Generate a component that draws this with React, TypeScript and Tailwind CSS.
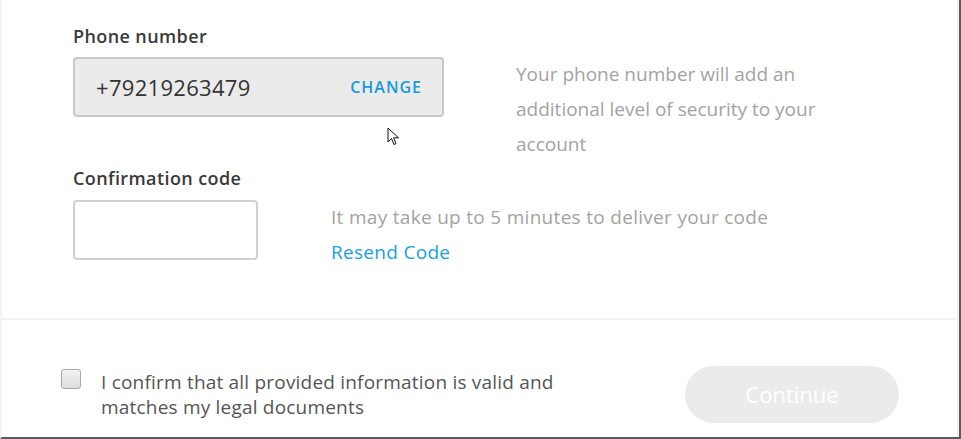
export default function App() {
  return (
    <div
      className="relative w-[961px] h-[439px] bg-white flex flex-col border-l-2 border-l-[#f3f3f3] border-r-2 border-r-[#5c5c5c] border-b-2 border-b-[#5c5c5c] overflow-hidden"
      style={{ fontFamily: '"Open Sans", "Liberation Sans", sans-serif' }}
    >
      {/* Top: phone + code */}
      <div className="h-[318px] pl-[71px] pt-[24px] border-r-2 border-r-[#f0f0f0]">
        <div className="flex items-start h-[93px]">
          <div className="w-[371px] shrink-0">
            <div className="h-[24px] text-[18px] leading-[24px] font-semibold tracking-[0.4px] text-[#3a3a3a]">Phone number</div>
            <div className="mt-[9px] h-[60px] flex items-center justify-between rounded-[4px] border-2 border-[#c9c9c9] bg-[#ebebeb] pl-[21px] pr-[20px]">
              <span className="text-[22px] text-[#333] tracking-[0.3px]">+79219263479</span>
              <span className="text-[16px] font-semibold text-[#1a9ad7] tracking-[1px]">CHANGE</span>
            </div>
          </div>
          <p className="ml-[72px] mt-[33px] w-[340px] text-[19px] leading-[35px] text-[#a3a3a3]">
            Your phone number will add an additional level of security to your account
          </p>
        </div>

        <div className="flex items-start mt-[49px]">
          <div className="w-[185px] shrink-0">
            <div className="h-[24px] text-[18px] leading-[24px] font-semibold tracking-[0.4px] text-[#3a3a3a]">Confirmation code</div>
            <input
              type="text"
              className="mt-[10px] block w-[185px] h-[60px] rounded-[4px] border-2 border-[#d0d0d0] bg-white outline-none"
            />
          </div>
          <div className="ml-[73px] mt-[34px] text-[19px] leading-[35px] tracking-[0.3px]">
            <p className="text-[#a3a3a3]">It may take up to 5 minutes to deliver your code</p>
            <p className="text-[#1a9fe0]">Resend Code</p>
          </div>
        </div>
      </div>

      {/* Bottom: confirm + continue */}
      <div className="flex-1 border-t-2 border-t-[#f2f2f2] border-r-2 border-r-[#f0f0f0] flex items-start pl-[59px] pt-[49px]">
        <div className="flex items-start">
          <div className="w-[20px] h-[20px] rounded-[3px] border border-[#a8a8a8] bg-gradient-to-b from-[#f2f2f2] to-[#dedede] shrink-0" />
          <p className="ml-[20px] mt-[1px] w-[500px] text-[19px] leading-[25px] tracking-[0.2px] text-[#555]">
            I confirm that all provided information is valid and matches my legal documents
          </p>
        </div>
        <button className="ml-[84px] -mt-[3px] w-[214px] h-[57px] rounded-full bg-[#ebebeb] text-white text-[22px]">
          Continue
        </button>
      </div>

      {/* mouse pointer */}
      <svg className="absolute left-[385px] top-[127px]" width="14" height="20" viewBox="0 0 14 20">
        <path d="M1 1 L1 15 L4.5 11.5 L7 17.5 L9 16.6 L6.6 10.8 L11.5 10.8 Z" fill="white" stroke="#111" strokeWidth="1" strokeLinejoin="round" />
      </svg>
    </div>
  );
}
